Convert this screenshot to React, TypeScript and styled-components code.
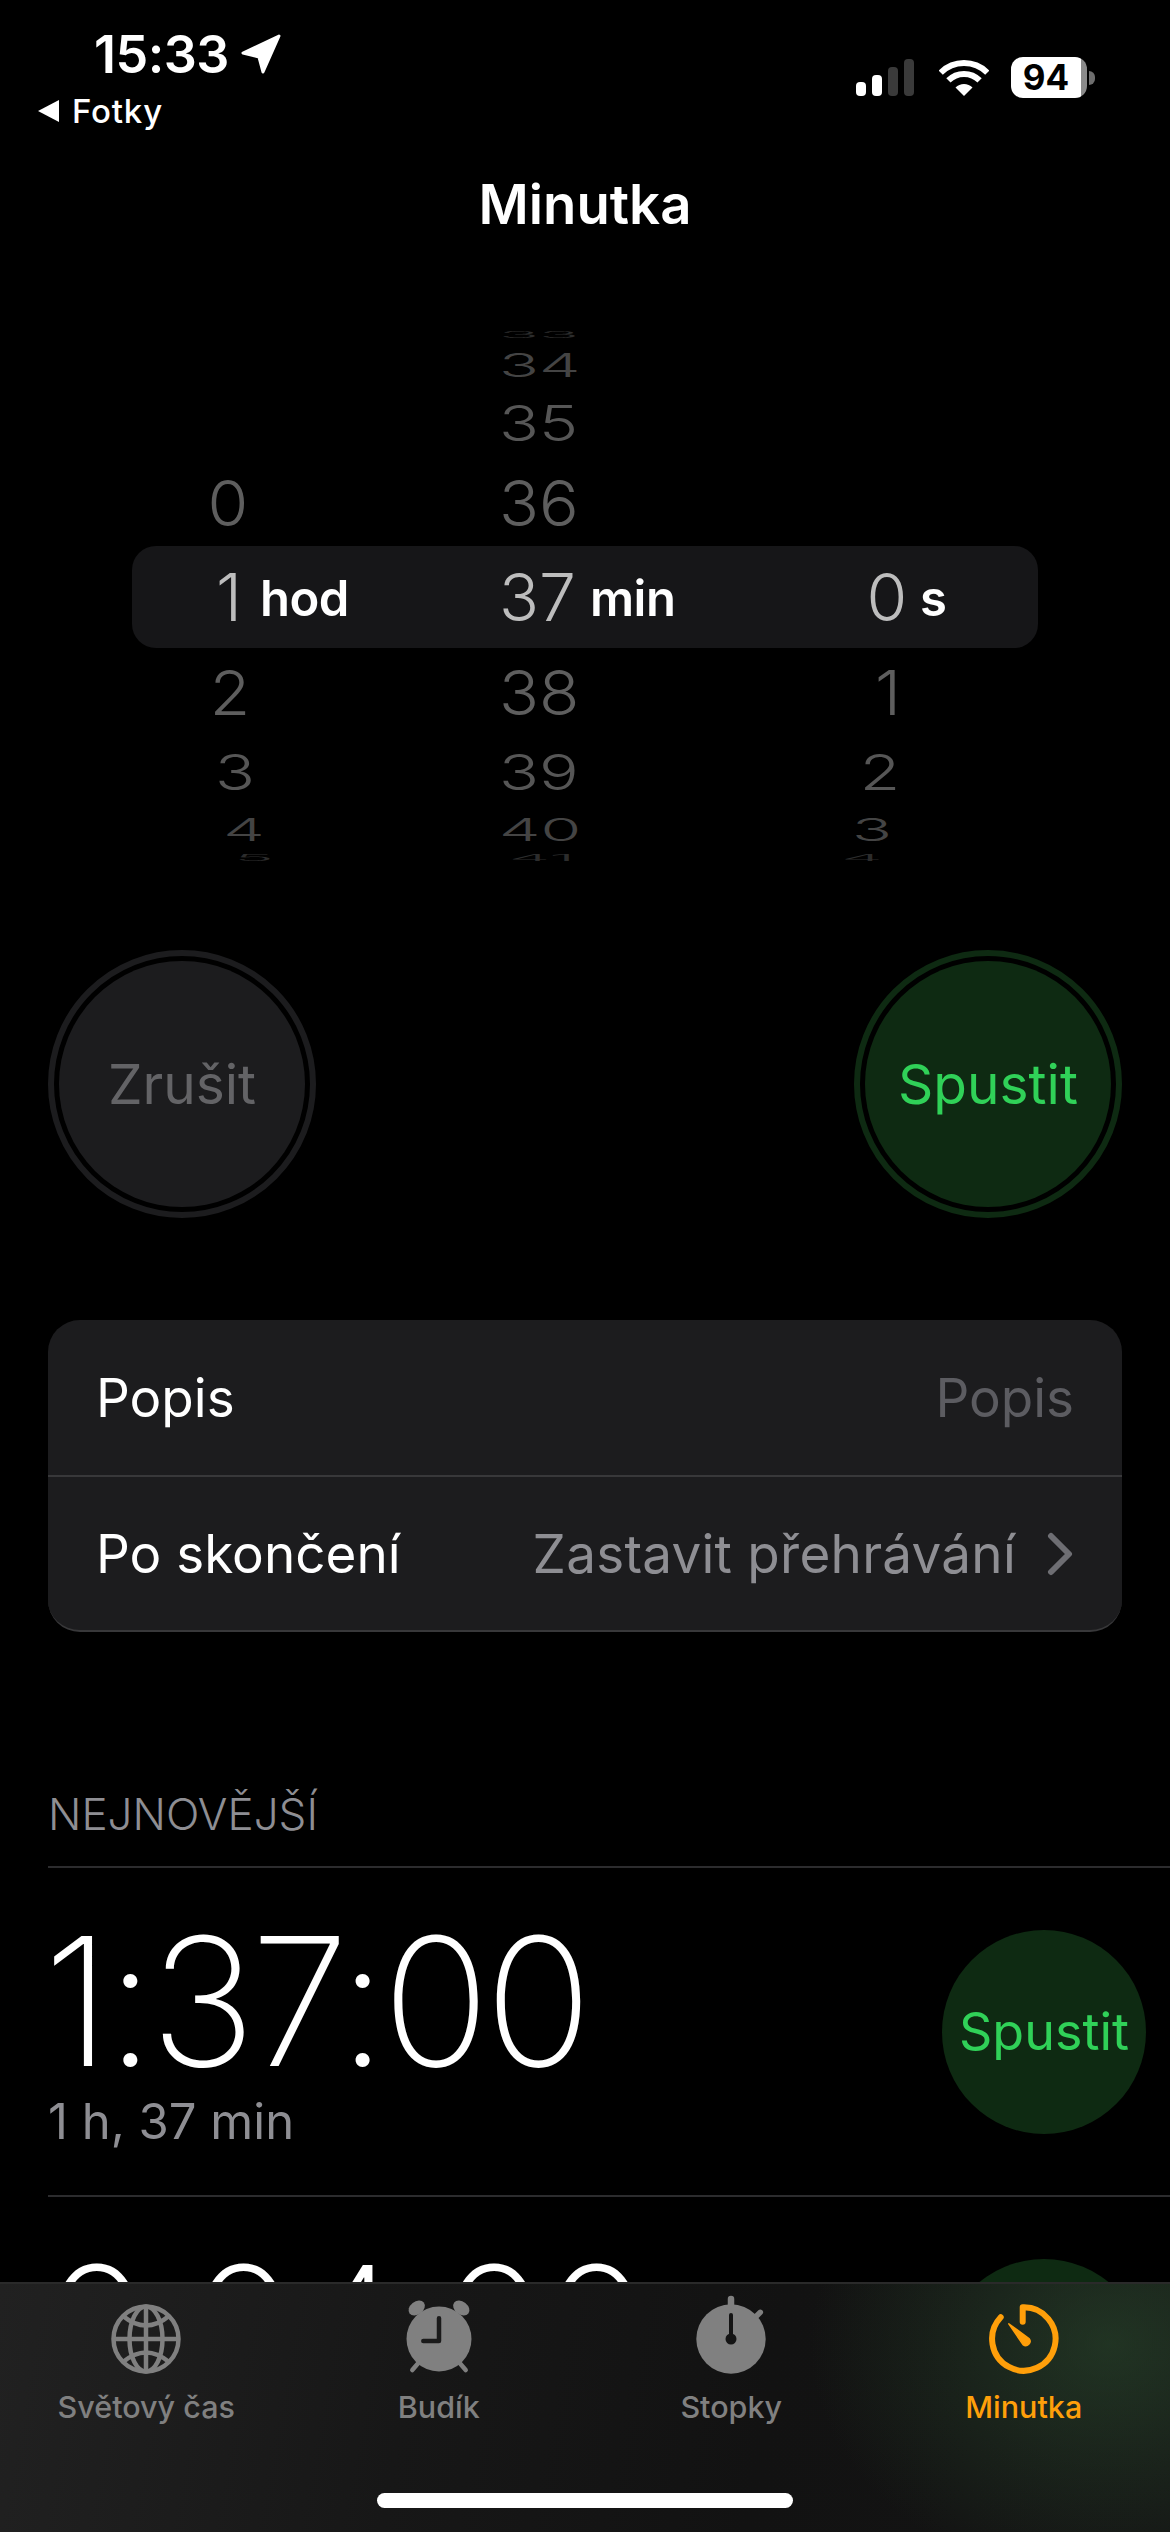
import { FC } from "react";
import styled, { createGlobalStyle } from "styled-components";

const GlobalStyle = createGlobalStyle`
    html, body {
        margin: 0;
        padding: 0;
        background: #000;
    }
    * {
        box-sizing: border-box;
    }
`;

// wheel slots, top to bottom: row height, vertical squash, digit colour
const slots = [
    { height: 28, scale: 0.13, color: "#2c2c2c" },
    { height: 31, scale: 0.49, color: "#444444" },
    { height: 85, scale: 0.74, color: "#565656" },
    { height: 75, scale: 0.96, color: "#5e5e5e" },
    { height: 114, scale: 1, color: "#bdbdbd" },
    { height: 76, scale: 0.94, color: "#5e5e5e" },
    { height: 84, scale: 0.74, color: "#565656" },
    { height: 32, scale: 0.47, color: "#444444" },
    { height: 24, scale: 0.13, color: "#2c2c2c" },
];

const SELECTED = 4;

const columns = [
    {
        width: 308,
        unit: "hod",
        unitGap: -7,
        values: ["", "", "", "0", "1", "2", "3", "4", "5"],
        shifts: [0, 0, 0, -1, 0, 1, 6, 15, 25],
    },
    {
        width: 350,
        unit: "min",
        unitGap: 15,
        values: ["33", "34", "35", "36", "37", "38", "39", "40", "41"],
        shifts: [0, 0, 0, 0, 0, 0, 0, 0, 5],
    },
    {
        width: 200,
        unit: "s",
        unitGap: -5,
        values: ["", "", "", "", "0", "1", "2", "3", "4"],
        shifts: [0, 0, 0, 0, 0, 1, -7, -15, -25],
    },
];

const tabs = [
    { label: "Světový čas", icon: <GlobeIcon /> },
    { label: "Budík", icon: <AlarmIcon /> },
    { label: "Stopky", icon: <StopwatchIcon /> },
    { label: "Minutka", icon: <TimerIcon />, active: true },
];

function GlobeIcon() {
    return <svg width="90" height="90" viewBox="0 0 90 90" fill="none" stroke="#808080" strokeWidth="4.5">
        <circle cx="45" cy="45" r="32.5" />
        <ellipse cx="45" cy="45" rx="16.5" ry="32.5" />
        <path d="M45 12.5V77.5M12.5 45H77.5" />
        <path d="M22 22Q45 41 68 22M22 68Q45 49 68 68" />
    </svg>
}

function AlarmIcon() {
    return <svg width="90" height="90" viewBox="0 0 90 90" fill="#808080">
        <circle cx="45" cy="45" r="32.5" />
        <ellipse cx="22.7" cy="14" rx="9" ry="6.5" transform="rotate(-38 22.7 14)" />
        <ellipse cx="67.3" cy="14" rx="9" ry="6.5" transform="rotate(38 67.3 14)" />
        <path d="M25 68.3L18.3 76M65 68.3L71.7 76" stroke="#808080" strokeWidth="4.5" strokeLinecap="round" />
        <path d="M45 24.3V47H29.3" fill="none" stroke="#1a1a1a" strokeWidth="4.5" strokeLinecap="round" strokeLinejoin="round" />
    </svg>
}

function StopwatchIcon() {
    return <svg width="90" height="90" viewBox="0 0 90 90" fill="#808080">
        <circle cx="45" cy="45" r="34.7" />
        <path d="M45 5V14" stroke="#808080" strokeWidth="6.5" strokeLinecap="round" />
        <path d="M68.3 24.3L74.3 18.3" stroke="#808080" strokeWidth="5.5" strokeLinecap="round" />
        <path d="M45 21V45" stroke="#141414" strokeWidth="4" strokeLinecap="round" />
        <circle cx="45" cy="45" r="5.5" fill="#141414" />
    </svg>
}

function TimerIcon() {
    return <svg width="90" height="90" viewBox="0 0 90 90" fill="none">
        <path d="M43.7 27.7V13.3A31.7 31.7 0 1 1 21.7 23.3" stroke="#ff9f0a" strokeWidth="6" strokeLinecap="round" strokeLinejoin="round" />
        <path d="M29.8 29.8L50 44.5A4.3 4.3 0 0 1 44 50.6Z" fill="#ff9f0a" stroke="#ff9f0a" strokeWidth="1.5" strokeLinejoin="round" />
    </svg>
}

const StatusIcons: FC = () => <StatusRight>
    <svg width="58" height="37" viewBox="0 0 58 37">
        <rect x="0" y="23" width="10" height="14" rx="4" fill="#fff" />
        <rect x="16" y="16" width="10" height="21" rx="4" fill="#fff" />
        <rect x="32" y="8" width="10" height="29" rx="4" fill="#3a3a3a" />
        <rect x="48" y="0" width="10" height="37" rx="4" fill="#3a3a3a" />
    </svg>
    <WifiIcon width="50" height="37" viewBox="0 0 50 37" fill="none" stroke="#fff">
        <path d="M1.7 13.7A33 33 0 0 1 48.3 13.7" strokeWidth="6" />
        <path d="M9.4 21.4A22 22 0 0 1 40.6 21.4" strokeWidth="6" />
        <path d="M25 37L16.5 28.5A12 12 0 0 1 33.5 28.5Z" fill="#fff" stroke="none" />
    </WifiIcon>
    <Battery>
        <BatteryLevel>94</BatteryLevel>
    </Battery>
    <BatteryCap />
</StatusRight>

export default function App() {
    return <Page>
        <GlobalStyle />
        <StatusBar>
            <StatusLeft>
                <TimeRow>
                    15:33
                    <svg width="44" height="44" viewBox="0 0 44 44" fill="#fff" stroke="#fff" strokeWidth="3" strokeLinejoin="round">
                        <path d="M40 4L4 21L20 25L24 40Z" />
                    </svg>
                </TimeRow>
                <BackRow>
                    <BackArrow />
                    Fotky
                </BackRow>
            </StatusLeft>
            <StatusIcons />
        </StatusBar>

        <NavTitle>Minutka</NavTitle>

        <Wheel>
            <WheelHighlight />
            {columns.map(column => <WheelColumn key={column.unit} $width={column.width}>
                {slots.map((slot, index) => <WheelSlot key={index} $height={slot.height}>
                    <WheelDigit $scale={slot.scale} $shift={column.shifts[index]} $color={slot.color}>
                        {column.values[index]}
                    </WheelDigit>
                    {index === SELECTED && <WheelUnit $gap={column.unitGap}>{column.unit}</WheelUnit>}
                </WheelSlot>)}
            </WheelColumn>)}
        </Wheel>

        <Controls>
            <RingButton $fill="#1c1c1e" $ring="#1c1c1e" $color="#636366">Zrušit</RingButton>
            <RingButton $fill="#0e2a12" $ring="#0e2a12" $color="#30d158">Spustit</RingButton>
        </Controls>

        <Card>
            <CardRow>
                <CardLabel>Popis</CardLabel>
                <CardPlaceholder>Popis</CardPlaceholder>
            </CardRow>
            <CardRow>
                <CardLabel>Po skončení</CardLabel>
                <CardValue>
                    Zastavit přehrávání
                    <svg width="28" height="44" viewBox="0 0 28 44" fill="none" stroke="#6e6e73" strokeWidth="6" strokeLinecap="round" strokeLinejoin="round">
                        <path d="M5 4L23 22L5 40" />
                    </svg>
                </CardValue>
            </CardRow>
        </Card>

        <SectionLabel>NEJNOVĚJŠÍ</SectionLabel>

        <RecentList>
            <RecentRow>
                <RecentInfo>
                    <RecentTime>1:37:00</RecentTime>
                    <RecentCaption>1 h, 37 min</RecentCaption>
                </RecentInfo>
                <StartCircle>Spustit</StartCircle>
            </RecentRow>
            <RecentRow>
                <RecentInfo>
                    <RecentTime>0:04:00</RecentTime>
                </RecentInfo>
                <StartCircle>Spustit</StartCircle>
            </RecentRow>
        </RecentList>

        <TabBar>
            <TabRow>
                {tabs.map(tab => <Tab key={tab.label} $active={tab.active}>
                    {tab.icon}
                    <TabLabel>{tab.label}</TabLabel>
                </Tab>)}
            </TabRow>
            <HomeBar />
        </TabBar>
    </Page>
}

const Page = styled.div`
    position: relative;
    width: 1170px;
    height: 2532px;
    overflow: hidden;
    background: #000;
    color: #fff;
    font-family: Inter, "Liberation Sans", sans-serif;
`;

const StatusBar = styled.div`
    display: flex;
    justify-content: space-between;
    height: 150px;
`;

const StatusLeft = styled.div`
    display: flex;
    flex-direction: column;
    padding: 29px 0 0 38px;
`;

const TimeRow = styled.div`
    display: flex;
    align-items: center;
    gap: 10px;
    height: 50px;
    padding-left: 56px;
    font-size: 52px;
    font-weight: 600;
    letter-spacing: -0.5px;
`;

const BackRow = styled.div`
    display: flex;
    align-items: center;
    gap: 13px;
    height: 40px;
    margin-top: 12px;
    font-size: 33px;
    font-weight: 500;
    letter-spacing: 0.8px;
`;

const BackArrow = styled.span`
    width: 0;
    height: 0;
    border-top: 11px solid transparent;
    border-bottom: 11px solid transparent;
    border-right: 21px solid #fff;
`;

const StatusRight = styled.div`
    display: flex;
    align-items: flex-start;
    padding: 57px 75px 0 0;

    & > svg:first-child {
        margin: 2px 0 0 0;
    }
`;

const WifiIcon = styled.svg`
    margin: 2px 22px 0 25px;
`;

const Battery = styled.div`
    position: relative;
    width: 76px;
    height: 41px;
    border-radius: 12px;
    background: linear-gradient(to right, #fff 92%, #8a8a8a 92%);
`;

const BatteryLevel = styled.div`
    text-align: center;
    padding-right: 6px;
    color: #000;
    font-size: 35px;
    line-height: 41px;
    font-weight: 700;
`;

const BatteryCap = styled.div`
    width: 6px;
    height: 14px;
    margin: 14px 0 0 2px;
    border-radius: 0 7px 7px 0;
    background: #6e6e6e;
`;

const NavTitle = styled.div`
    display: flex;
    justify-content: center;
    height: 171px;
    padding-top: 24px;
    font-size: 54.5px;
    line-height: 60px;
    font-weight: 600;
`;

const Wheel = styled.div`
    position: relative;
    display: flex;
    padding-left: 191px;
`;

const WheelHighlight = styled.div`
    position: absolute;
    left: 132px;
    top: 225px;
    width: 906px;
    height: 102px;
    border-radius: 24px;
    background: #161618;
`;

const WheelColumn = styled.div<{ $width: number }>`
    position: relative;
    display: flex;
    flex-direction: column;
    width: ${props => props.$width}px;
`;

const WheelSlot = styled.div<{ $height: number }>`
    display: flex;
    align-items: center;
    height: ${props => props.$height}px;
`;

const WheelDigit = styled.div<{ $scale: number, $shift: number, $color: string }>`
    flex: none;
    width: 76px;
    text-align: center;
    font-size: 66px;
    line-height: 66px;
    font-weight: 340;
    white-space: nowrap;
    color: ${props => props.$color};
    transform: translateX(${props => props.$shift}px) scaleY(${props => props.$scale});
`;

const WheelUnit = styled.div<{ $gap: number }>`
    margin-left: ${props => props.$gap}px;
    margin-top: 4px;
    font-size: 49px;
    line-height: 60px;
    font-weight: 600;
    letter-spacing: -0.5px;
`;

const Controls = styled.div`
    display: flex;
    justify-content: space-between;
    margin-top: 80px;
    padding: 0 48px;
`;

const RingButton = styled.div<{ $fill: string, $ring: string, $color: string }>`
    display: flex;
    align-items: center;
    justify-content: center;
    width: 268px;
    height: 268px;
    padding: 5px;
    border: 6px solid ${props => props.$ring};
    border-radius: 50%;
    background: ${props => props.$fill};
    background-clip: content-box;
    color: ${props => props.$color};
    font-size: 55px;
`;

const Card = styled.div`
    margin: 102px 48px 0;
    border-radius: 32px;
    border-bottom: 2px solid #38383a;
    background: #1c1c1e;
    overflow: hidden;
`;

const CardRow = styled.div`
    display: flex;
    align-items: center;
    justify-content: space-between;
    height: 155px;
    padding: 0 48px;
    font-size: 53px;

    & + & {
        border-top: 2px solid #38383a;
    }
`;

const CardLabel = styled.div`
    color: #fff;
`;

const CardPlaceholder = styled.div`
    color: #5c5c61;
`;

const CardValue = styled.div`
    display: flex;
    align-items: center;
    gap: 30px;
    color: #8e8e93;
    letter-spacing: 0.25px;
`;

const SectionLabel = styled.div`
    height: 234px;
    padding: 157px 0 0 48px;
    border-bottom: 2px solid transparent;
    color: #8e8e93;
    font-size: 44px;
    line-height: 50px;
    font-weight: 340;
`;

// scroll area of the recents, it ends where the tab bar starts
const RecentList = styled.div`
    height: 416px;
    margin-left: 48px;
    border-top: 2px solid #2c2c2e;
    overflow: hidden;
`;

const RecentRow = styled.div`
    display: flex;
    align-items: center;
    justify-content: space-between;
    height: 329px;
    padding-right: 24px;
    border-bottom: 2px solid #2c2c2e;
`;

const RecentInfo = styled.div`
    align-self: flex-start;
    padding-top: 54px;
`;

const RecentTime = styled.div`
    margin-left: -5px;
    font-size: 178px;
    line-height: 160px;
    font-weight: 170;
    letter-spacing: -5px;
`;

const RecentCaption = styled.div`
    margin-top: 12px;
    color: #8e8e93;
    font-size: 49px;
    line-height: 56px;
`;

const StartCircle = styled.div`
    display: flex;
    align-items: center;
    justify-content: center;
    width: 204px;
    height: 204px;
    border-radius: 50%;
    background: #0e2a12;
    color: #30d158;
    font-size: 52px;
`;

const TabBar = styled.div`
    position: absolute;
    left: 0;
    right: 0;
    bottom: 0;
    height: 250px;
    border-top: 2px solid #2a2a2a;
    background:
        radial-gradient(ellipse 300px 240px at 1110px 60px, rgba(44, 78, 48, 0.55), rgba(44, 78, 48, 0) 100%),
        linear-gradient(100deg, #212121 0%, #171717 35%, #121212 65%, #141414 100%);
`;

const TabRow = styled.div`
    display: flex;
    height: 209px;
    padding-top: 10px;
`;

const Tab = styled.div<{ $active?: boolean }>`
    flex: 1;
    display: flex;
    flex-direction: column;
    align-items: center;
    color: ${props => props.$active ? "#ff9f0a" : "#808080"};
`;

const TabLabel = styled.div`
    margin-top: 3px;
    font-size: 30.5px;
    line-height: 40px;
    font-weight: 500;
`;

const HomeBar = styled.div`
    width: 416px;
    height: 15px;
    margin: 0 auto;
    border-radius: 8px;
    background: #fff;
`;
